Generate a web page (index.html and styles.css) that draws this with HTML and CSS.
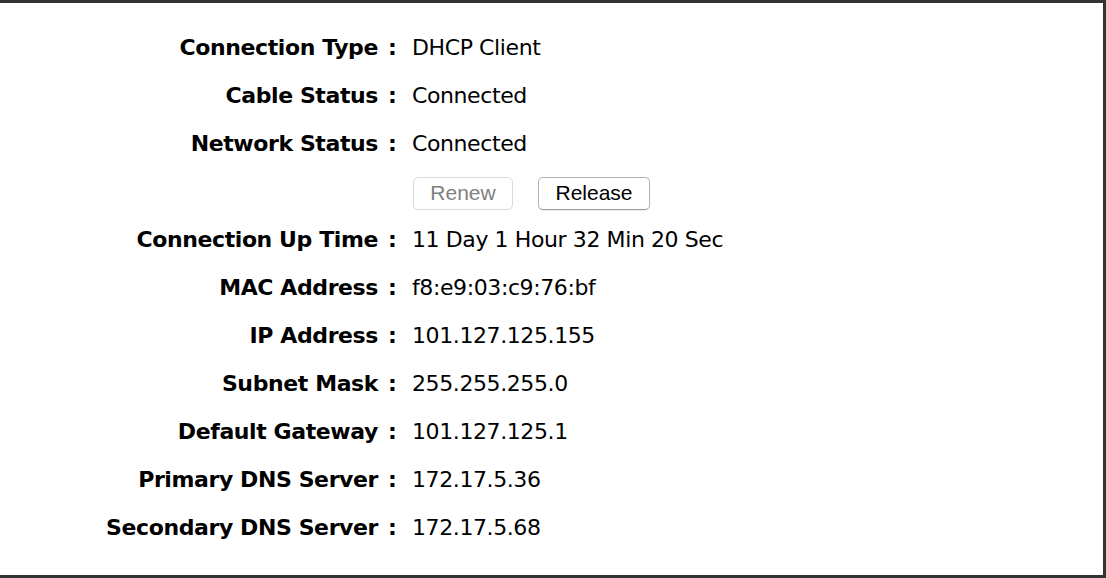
FILE: index.html
```html
<!DOCTYPE html>
<html>
<head>
<meta charset="utf-8">
<link rel="stylesheet" href="styles.css">
</head>
<body>
<div class="frame">
  <div class="info">
    <div class="label">Connection Type</div><div class="colon">:</div><div class="value">DHCP Client</div>
    <div class="label">Cable Status</div><div class="colon">:</div><div class="value">Connected</div>
    <div class="label">Network Status</div><div class="colon">:</div><div class="value">Connected</div>
    <div class="label"></div><div class="colon"></div>
    <div class="value actions">
      <button class="btn btn-disabled" disabled>Renew</button>
      <button class="btn">Release</button>
    </div>
    <div class="label">Connection Up Time</div><div class="colon">:</div><div class="value">11 Day 1 Hour 32 Min 20 Sec</div>
    <div class="label">MAC Address</div><div class="colon">:</div><div class="value">f8:e9:03:c9:76:bf</div>
    <div class="label">IP Address</div><div class="colon">:</div><div class="value">101.127.125.155</div>
    <div class="label">Subnet Mask</div><div class="colon">:</div><div class="value">255.255.255.0</div>
    <div class="label">Default Gateway</div><div class="colon">:</div><div class="value">101.127.125.1</div>
    <div class="label">Primary DNS Server</div><div class="colon">:</div><div class="value">172.17.5.36</div>
    <div class="label">Secondary DNS Server</div><div class="colon">:</div><div class="value">172.17.5.68</div>
  </div>
</div>
</body>
</html>
```
FILE: styles.css
```css
html, body {
  margin: 0;
  padding: 0;
  background: #fff;
}
.frame {
  box-sizing: border-box;
  height: 100vh;
  border-top: 3px solid #333;
  border-right: 3px solid #333;
  border-bottom: 3px solid #333;
  padding-top: 20px;
  font-family: "DejaVu Sans", sans-serif;
  font-size: 22px;
  letter-spacing: -0.4px;
  color: #000;
}
.info {
  display: grid;
  grid-template-columns: 380px 32px 1fr;
  grid-auto-rows: 48px;
  align-items: center;
}
.label {
  text-align: right;
  font-weight: bold;
  padding-right: 2px;
}
.colon {
  font-weight: bold;
  padding-left: 8px;
}
.actions {
  display: flex;
  gap: 25px;
  align-items: center;
  padding-top: 4px;
  margin-left: 1px;
}
.btn {
  font-family: "Liberation Sans", Arial, sans-serif;
  font-size: 21px;
  letter-spacing: 0;
  height: 33px;
  padding: 0 14px;
  background: #fff;
  border: 1px solid #b4b4b4;
  border-bottom-color: #9a9a9a;
  border-radius: 5px;
  color: #000;
  box-shadow: 0 1px 1px rgba(0,0,0,0.08);
}
.btn-disabled {
  width: 100px;
  color: #808080;
  border-color: #dadada;
  box-shadow: none;
}
.btn:not(.btn-disabled) {
  width: 112px;
}
```
